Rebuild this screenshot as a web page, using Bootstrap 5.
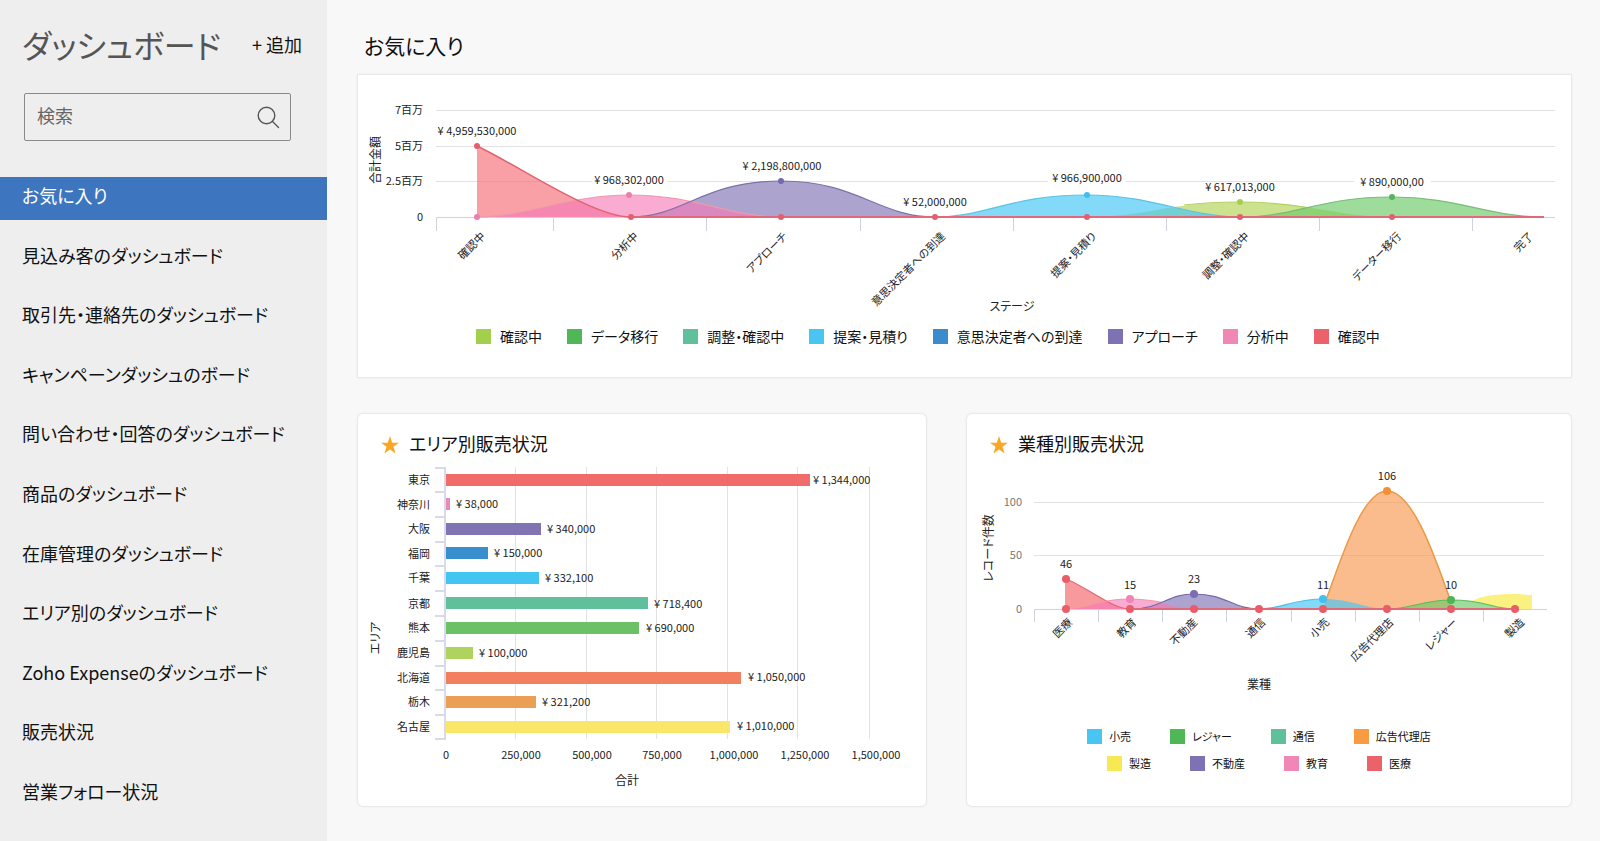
<!DOCTYPE html>
<html lang="ja">
<head>
<meta charset="utf-8">
<meta name="viewport" content="width=device-width, initial-scale=1">
<title>ダッシュボード</title>
<link href="https://cdn.jsdelivr.net/npm/bootstrap@5.3.0/dist/css/bootstrap.min.css" rel="stylesheet">
<style>
  body { font-family: "Noto Sans CJK JP", sans-serif; font-feature-settings: "palt"; color: #111; background: #f8f8f8; }
  .side { width: 327px; background: #eee; padding-bottom: 25px; }
  .side-head { padding: 20px 25px 0 22px; }
  .side-title { font-size: 32px; line-height: 48px; font-weight: 400; color: #555; }
  .add-btn { font-size: 18px; line-height: 24px; color: #111; background: none; border: 0; padding: 0; }
  .finder { margin: 25px 36px 36px 24px; border: 1px solid #8a8a8a; border-radius: 2px; height: 48px; padding: 0 10px 0 12px; }
  .finder input { font-size: 18px; color: #333; background: none; border: 0; padding: 0 0 4px; outline: 0; min-width: 0; }
  .finder input::placeholder { color: #666; opacity: 1; }
  .finder button { background: none; border: 0; padding: 0; line-height: 0; }
  .side-nav a { font-size: 18px; line-height: 36px; padding: 0 22px 7px; color: #111; text-decoration: none; }
  .side-nav a.active { background: #3d76be; color: #fff; }
  .board { padding: 27px 28px 34px 30px; min-width: 0; }
  .board-title { font-size: 21px; line-height: 36px; font-weight: 400; margin: 0 0 11px 7px; }
  .panel { background: #fff; border: 1px solid #e9e9e9; box-shadow: 0 0 2px #ececec; }
  .pair { display: grid; grid-template-columns: 570fr 606fr; gap: 39px; margin-top: 35px; }
  .pair .panel { border-radius: 6px; }
  .panel-title { font-size: 18px; line-height: 25px; font-weight: 400; margin: 0; padding: 17px 24px 3px 23px; gap: 10px; }
  .plot { display: block; width: 100%; height: auto; font-size: 11px; fill: #222; }
  .plot .axis-name { font-size: 12px; }
  .plot .grid { stroke: #e2e2e4; fill: none; }
  .plot .axis { stroke: #cfd3de; fill: none; }
  .plot .axis-bold { stroke: #d8daea; stroke-width: 2; }
  .plot .base { stroke: #e0697b; stroke-width: 2; }
  .plot .soft { fill: #777; }
  .keys { font-size: 14px; line-height: 20px; gap: 0 25px; }
  .keys li { display: flex; align-items: center; gap: 9px; }
  .keys i { width: 15px; height: 15px; flex: none; }
  .keys-wide { padding: 0 20px 31px 118px; margin-top: 7px; }
  .keys-small { font-size: 11px; line-height: 27px; gap: 0 39px; padding-right: 20px; }
  .keys-small li { gap: 7px; }
  .c-lime { background: #a4cf4c; } .c-green { background: #50b757; } .c-teal { background: #60c09c; }
  .c-sky { background: #48c6f1; } .c-blue { background: #3a8ccc; } .c-violet { background: #7f72b2; }
  .c-pink { background: #f087b5; } .c-red { background: #ec626b; } .c-orange { background: #f99b43; } .c-yellow { background: #f8e854; }
</style>
</head>
<body>
<div class="d-flex min-vh-100">
  <aside class="side d-flex flex-column flex-shrink-0">
    <div class="side-head d-flex align-items-center justify-content-between">
      <h1 class="side-title m-0">ダッシュボード</h1>
      <button type="button" class="add-btn">+ 追加</button>
    </div>
    <form class="finder d-flex align-items-center" role="search">
      <input type="search" class="flex-grow-1" placeholder="検索" aria-label="検索">
      <button type="submit" aria-label="検索する">
        <svg width="23" height="23" viewBox="0 0 23 23" fill="none" stroke="#555" stroke-width="1.4" stroke-linecap="round"><circle cx="9.500" cy="9.500" r="8.300"/><path d="M15.500 15.500L21.500 21.500"/></svg>
      </button>
    </form>
    <nav class="side-nav flex-grow-1 d-flex flex-column justify-content-between">
      <a href="#" class="active" aria-current="page">お気に入り</a>
      <a href="#">見込み客のダッシュボード</a>
      <a href="#">取引先・連絡先のダッシュボード</a>
      <a href="#">キャンペーンダッシュのボード</a>
      <a href="#">問い合わせ・回答のダッシュボード</a>
      <a href="#">商品のダッシュボード</a>
      <a href="#">在庫管理のダッシュボード</a>
      <a href="#">エリア別のダッシュボード</a>
      <a href="#">Zoho Expenseのダッシュボード</a>
      <a href="#">販売状況</a>
      <a href="#">営業フォロー状況</a>
    </nav>
  </aside>

  <main class="board flex-grow-1">
    <h2 class="board-title">お気に入り</h2>

    <section class="panel">
      <svg class="plot" viewBox="0 0 1213 244" role="img" aria-label="ステージ別の合計金額">
        <path class="grid" d="M78 35.500H1197M78 71.500H1197M78 106.500H1197"/>
        <path class="axis" d="M78.500 156V142.500H1197M195.500 142V156M348.500 142V156M502.500 142V156M655.500 142V156M808.500 142V156M961.500 142V156M1114.500 142V156"/>
        <g fill="#fff"><rect x="234" y="98" width="75" height="14"/><rect x="690" y="98" width="78" height="14"/><rect x="996" y="99" width="77" height="14"/></g>
        <g stroke-width="1.200">
          <path fill="#f56d74" fill-opacity=".65" d="M119 71C165 93 235 142 273 142H119Z"/>
          <path fill="#8073b6" fill-opacity=".65" d="M273 142C325 142 345 106 423 106C500 106 520 142 577 142Z"/>
          <path fill="#f678b6" fill-opacity=".62" d="M119 142C170 142 210 120 271 120C340 120 370 142 423 142Z"/>
          <path fill="#b2d352" fill-opacity=".65" d="M729 142C790 142 810 127 882 127C950 127 980 142 1034 142Z"/>
          <path fill="#45c6f4" fill-opacity=".67" d="M577 142C630 142 650 120 729 120C795 120 830 142 882 142Z"/>
          <path fill="#6ac966" fill-opacity=".65" d="M882 142C940 142 960 122 1034 122C1100 122 1130 142 1186 142Z"/>
          <g fill="none">
            <path stroke="#e9a" d="M119 142C170 142 210 120 271 120C340 120 370 142 423 142"/>
            <path stroke="#7d72a8" d="M273 142C325 142 345 106 423 106C500 106 520 142 577 142"/>
            <path stroke="#5cc3e4" d="M577 142C630 142 650 120 729 120C795 120 830 142 882 142"/>
            <path stroke="#b4d166" d="M826 130C843 128 860 127 882 127C915 127 935 130 953 133"/>
            <path stroke="#78bd76" d="M882 142C940 142 960 122 1034 122C1100 122 1130 142 1186 142"/>
            <path stroke="#e2646f" stroke-width="1.500" d="M119 71C165 93 235 142 273 142"/>
          </g>
        </g>
        <path class="base" d="M273 142H1186"/>
        <g fill="#e0606f"><circle cx="119" cy="71" r="3"/><circle cx="273" cy="142" r="3"/><circle cx="423" cy="142" r="3"/><circle cx="577" cy="142" r="3"/><circle cx="729" cy="142" r="3"/><circle cx="882" cy="142" r="3"/><circle cx="1034" cy="142" r="3"/></g>
        <g fill="#ea7fae"><circle cx="119" cy="142" r="3"/><circle cx="271" cy="120" r="3"/></g>
        <circle cx="423" cy="106" r="3" fill="#7568b0"/><circle cx="729" cy="120" r="3" fill="#42bdec"/><circle cx="882" cy="127" r="3" fill="#a3cf50"/><circle cx="1034" cy="122" r="3" fill="#55b45c"/>
        <g text-anchor="end">
          <text x="65" y="39">7百万</text><text x="65" y="75">5百万</text><text x="65" y="110">2.5百万</text><text x="65" y="146">0</text>
        </g>
        <g text-anchor="middle">
          <text x="119" y="60">¥ 4,959,530,000</text><text x="271" y="109">¥ 968,302,000</text><text x="424" y="95">¥ 2,198,800,000</text><text x="577" y="131">¥ 52,000,000</text><text x="729" y="107">¥ 966,900,000</text><text x="882" y="116">¥ 617,013,000</text><text x="1034" y="111">¥ 890,000,00</text>
        </g>
        <g text-anchor="end">
          <text transform="translate(128 162) rotate(-45)">確認中</text><text transform="translate(281 162) rotate(-45)">分析中</text><text transform="translate(430 162) rotate(-45)">アプローチ</text><text transform="translate(588 162) rotate(-45)">意思決定者への到達</text><text transform="translate(739 162) rotate(-45)">提案・見積り</text><text transform="translate(892 162) rotate(-45)">調整・確認中</text><text transform="translate(1044 162) rotate(-45)">データー移行</text><text transform="translate(1176 162) rotate(-45)">完了</text>
        </g>
        <g class="axis-name" text-anchor="middle">
          <text transform="translate(22 85) rotate(-90)">合計金額</text><text x="654" y="236">ステージ</text>
        </g>
      </svg>
      <ul class="keys keys-wide list-unstyled d-flex flex-wrap mb-0">
        <li><i class="c-lime"></i>確認中</li><li><i class="c-green"></i>データ移行</li><li><i class="c-teal"></i>調整・確認中</li><li><i class="c-sky"></i>提案・見積り</li><li><i class="c-blue"></i>意思決定者への到達</li><li><i class="c-violet"></i>アプローチ</li><li><i class="c-pink"></i>分析中</li><li><i class="c-red"></i>確認中</li>
      </ul>
    </section>

    <div class="pair">
      <section class="panel">
        <h3 class="panel-title d-flex align-items-center"><svg width="18" height="18" viewBox="0 -1 17 17" fill="#f9a825"><path d="M8.500 0L10.600 6.300H17L11.800 10.200L13.800 16.500L8.500 12.600L3.200 16.500L5.200 10.200L0 6.300H6.400Z"/></svg>エリア別販売状況</h3>
        <svg class="plot" viewBox="0 0 568 347" role="img" aria-label="エリア別の合計">
          <path class="grid" d="M157.500 8V280M228.500 8V280M298.500 8V280M369.500 8V280M439.500 8V280M511.500 8V280"/>
          <path class="axis axis-bold" d="M77 9H87V280H77M77 33H88M77 58H88M77 83H88M77 107H88M77 132H88M77 157H88M77 182H88M77 207H88M77 231H88M77 256H88"/>
          <rect x="88" y="15" width="364" height="12" fill="#f06c6b"/><rect x="88" y="39" width="4" height="12" fill="#e78ab5"/><rect x="88" y="64" width="95" height="12" fill="#8074b3"/><rect x="88" y="88" width="42" height="12" fill="#378fcd"/><rect x="88" y="113" width="93" height="12" fill="#42c5f0"/><rect x="88" y="138" width="202" height="12" fill="#60c09c"/><rect x="88" y="163" width="193" height="12" fill="#6cc166"/><rect x="88" y="188" width="27" height="12" fill="#aed35e"/><rect x="88" y="213" width="295" height="12" fill="#f27f60"/><rect x="88" y="237" width="90" height="12" fill="#eb9f55"/><rect x="88" y="262" width="284" height="12" fill="#fae668"/>
          <g text-anchor="end">
            <text x="72" y="25">東京</text><text x="72" y="50">神奈川</text><text x="72" y="74">大阪</text><text x="72" y="99">福岡</text><text x="72" y="123">千葉</text><text x="72" y="149">京都</text><text x="72" y="173">熊本</text><text x="72" y="198">鹿児島</text><text x="72" y="223">北海道</text><text x="72" y="247">栃木</text><text x="72" y="272">名古屋</text>
          </g>
          <text x="455" y="25">¥ 1,344,000</text><text x="98" y="49">¥ 38,000</text><text x="189" y="74">¥ 340,000</text><text x="136" y="98">¥ 150,000</text><text x="187" y="123">¥ 332,100</text><text x="296" y="149">¥ 718,400</text><text x="288" y="173">¥ 690,000</text><text x="121" y="198">¥ 100,000</text><text x="390" y="222">¥ 1,050,000</text><text x="184" y="247">¥ 321,200</text><text x="379" y="271">¥ 1,010,000</text>
          <g text-anchor="middle">
            <text x="88" y="300">0</text><text x="163" y="300">250,000</text><text x="234" y="300">500,000</text><text x="304" y="300">750,000</text><text x="376" y="300">1,000,000</text><text x="447" y="300">1,250,000</text><text x="518" y="300">1,500,000</text>
            <g class="axis-name"><text x="269" y="326">合計</text><text transform="translate(22 179) rotate(-90)">エリア</text></g>
          </g>
        </svg>
      </section>

      <section class="panel">
        <h3 class="panel-title d-flex align-items-center"><svg width="18" height="18" viewBox="0 -1 17 17" fill="#f9a825"><path d="M8.500 0L10.600 6.300H17L11.800 10.200L13.800 16.500L8.500 12.600L3.200 16.500L5.200 10.200L0 6.300H6.400Z"/></svg>業種別販売状況</h3>
        <svg class="plot" viewBox="0 0 604 256" role="img" aria-label="業種別のレコード件数">
          <path class="grid" d="M67 43.500H577M67 96.500H577"/>
          <path class="axis" d="M67.500 163V150.500H580M131.500 150V163M195.500 150V163M259.500 150V163M324.500 150V163M388.500 150V163M452.500 150V163M516.500 150V163"/>
          <path fill="#f56d74" fill-opacity=".7" d="M98 120C120 128 145 150 163 150H98Z"/>
          <path fill="#8073b6" fill-opacity=".65" d="M163 150C195 150 200 135 227 135C260 135 265 150 292 150Z"/>
          <path fill="#f678b6" fill-opacity=".62" d="M99 150C125 150 130 140 163 140C195 140 205 150 227 150Z"/>
          <path fill="#f99347" fill-opacity=".62" d="M356 150C372 105 395 32 420 32C447 32 470 105 484 141V150Z"/>
          <path fill="#45c6f4" fill-opacity=".67" d="M292 150C315 150 325 140 356 140C385 140 400 150 420 150Z"/>
          <path fill="#6ac966" fill-opacity=".65" d="M420 150C445 150 455 141 484 141C520 141 525 150 548 150Z"/>
          <path fill="#faed60" fill-opacity=".8" d="M505 142C516 136 530 135 548 135C556 135 560 136 565 136V150H545C530 150 520 143 505 142Z"/>
          <g fill="none" stroke-width="1.200">
            <path stroke="#e2646f" d="M99 120C120 128 145 150 163 150"/>
            <path stroke="#e9a" d="M132 144C142 141 150 140 163 140C180 140 188 142 197 144"/>
            <path stroke="#7568a8" d="M163 150C195 150 200 135 227 135C260 135 265 150 292 150"/>
            <path stroke="#e99a45" stroke-width="1.500" d="M358 144C374 100 395 32 420 32C447 32 470 105 483 140"/>
            <path stroke="#48c0ea" d="M292 150C315 150 325 140 356 140"/>
            <path stroke="#5cb85c" d="M420 150C445 150 455 141 484 141C520 141 525 150 548 150"/>
          </g>
          <path class="base" d="M163 150H548"/>
          <g fill="#e85d68"><circle cx="99" cy="120" r="4"/><circle cx="99" cy="150" r="4"/><circle cx="163" cy="150" r="4"/><circle cx="227" cy="150" r="4"/><circle cx="292" cy="150" r="4"/><circle cx="356" cy="150" r="4"/><circle cx="420" cy="150" r="4"/><circle cx="484" cy="150" r="4"/><circle cx="548" cy="150" r="4"/></g>
          <circle cx="163" cy="140" r="4" fill="#f283b6"/><circle cx="227" cy="135" r="4" fill="#7a6db4"/><circle cx="356" cy="140" r="4" fill="#42c0f2"/><circle cx="420" cy="32" r="4" fill="#f58f35"/><circle cx="484" cy="141" r="4" fill="#4db555"/>
          <g class="soft" text-anchor="end"><text x="55" y="47">100</text><text x="55" y="100">50</text><text x="55" y="154">0</text></g>
          <g text-anchor="middle">
            <text x="99" y="109">46</text><text x="163" y="130">15</text><text x="227" y="124">23</text><text x="356" y="130">11</text><text x="420" y="21">106</text><text x="484" y="130">10</text>
            <g class="axis-name"><text transform="translate(26 89) rotate(-90)">レコード件数</text><text x="292" y="230">業種</text></g>
          </g>
          <g text-anchor="end">
            <text transform="translate(106 164) rotate(-45)">医療</text><text transform="translate(170 164) rotate(-45)">教育</text><text transform="translate(231 164) rotate(-45)">不動産</text><text transform="translate(299 164) rotate(-45)">通信</text><text transform="translate(363 164) rotate(-45)">小売</text><text transform="translate(427 164) rotate(-45)">広告代理店</text><text transform="translate(491 164) rotate(-45)">レジャー</text><text transform="translate(558 164) rotate(-45)">製造</text>
          </g>
        </svg>
        <ul class="keys keys-small list-unstyled d-flex flex-wrap justify-content-center mb-0 mt-2">
          <li><i class="c-sky"></i>小売</li><li><i class="c-green"></i>レジャー</li><li><i class="c-teal"></i>通信</li><li><i class="c-orange"></i>広告代理店</li>
        </ul>
        <ul class="keys keys-small list-unstyled d-flex flex-wrap justify-content-center mb-0">
          <li><i class="c-yellow"></i>製造</li><li><i class="c-violet"></i>不動産</li><li><i class="c-pink"></i>教育</li><li><i class="c-red"></i>医療</li>
        </ul>
      </section>
    </div>
  </main>
</div>
<script src="https://cdn.jsdelivr.net/npm/bootstrap@5.3.0/dist/js/bootstrap.bundle.min.js"></script>
</body>
</html>
